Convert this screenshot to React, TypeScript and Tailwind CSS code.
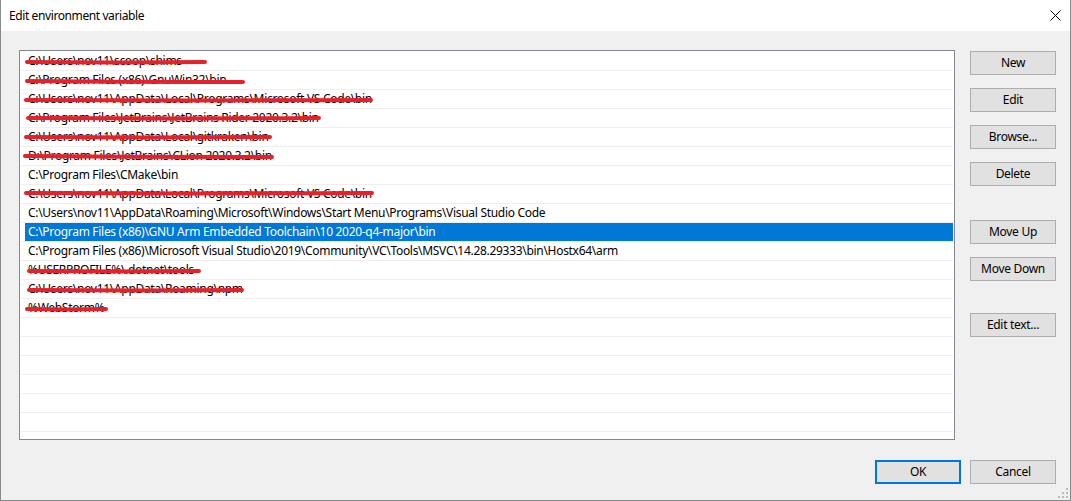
import React from "react";

type Row = { text: string; strike?: [number, number, number, number] };

const rows: Row[] = [
  { text: "C:\\Users\\nov11\\scoop\\shims", strike: [27, 61, 205, 61] },
  { text: "C:\\Program Files (x86)\\GnuWin32\\bin", strike: [27, 80, 243, 81] },
  { text: "C:\\Users\\nov11\\AppData\\Local\\Programs\\Microsoft VS Code\\bin", strike: [26, 99, 371, 99] },
  { text: "C:\\Program Files\\JetBrains\\JetBrains Rider 2020.3.2\\bin", strike: [28, 117, 319, 117] },
  { text: "C:\\Users\\nov11\\AppData\\Local\\gitkraken\\bin", strike: [26, 136, 270, 136] },
  { text: "D:\\Program Files\\JetBrains\\CLion 2020.3.2\\bin", strike: [25, 155, 272, 156] },
  { text: "C:\\Program Files\\CMake\\bin" },
  { text: "C:\\Users\\nov11\\AppData\\Local\\Programs\\Microsoft VS Code\\bin", strike: [26, 192, 372, 192] },
  { text: "C:\\Users\\nov11\\AppData\\Roaming\\Microsoft\\Windows\\Start Menu\\Programs\\Visual Studio Code" },
  { text: "C:\\Program Files (x86)\\GNU Arm Embedded Toolchain\\10 2020-q4-major\\bin" },
  { text: "C:\\Program Files (x86)\\Microsoft Visual Studio\\2019\\Community\\VC\\Tools\\MSVC\\14.28.29333\\bin\\Hostx64\\arm" },
  { text: "%USERPROFILE%\\.dotnet\\tools", strike: [29, 270, 199, 270] },
  { text: "C:\\Users\\nov11\\AppData\\Roaming\\npm", strike: [29, 289, 242, 289] },
  { text: "%WebStorm%", strike: [27, 308, 106, 308] },
];

const SELECTED = 9;
const TOTAL_ROWS = 20;

function Btn({ children, primary }: { children: React.ReactNode; primary?: boolean }) {
  return (
    <div
      className={
        "w-[86px] h-[24px] flex items-center justify-center bg-[#e1e1e1] text-[12px] text-black tracking-[-0.3px] " +
        (primary ? "border-2 border-[#0078d7]" : "border border-[#adadad]")
      }
    >
      {children}
    </div>
  );
}

export default function App() {
  const all: (Row | null)[] = [];
  for (let i = 0; i < TOTAL_ROWS; i++) all.push(rows[i] ?? null);

  return (
    <div
      className="relative w-[1071px] h-[501px] flex flex-col border-l border-r border-b border-[#8a8a8a] bg-[#f0f0f0] overflow-hidden"
      style={{ fontFamily: '"Noto Sans", "Liberation Sans", sans-serif' }}
    >
      {/* Title bar */}
      <div className="h-[31px] bg-white flex items-center justify-between pl-[8px] pr-[9px] shrink-0">
        <span className="text-[12px] text-black tracking-[-0.4px]">Edit environment variable</span>
        <svg width="11" height="11" viewBox="0 0 11 11" className="mt-[-1px]">
          <path d="M0.5 0.5 L10.5 10.5 M10.5 0.5 L0.5 10.5" stroke="#000" strokeWidth="1" />
        </svg>
      </div>

      {/* Body */}
      <div className="flex-1 flex flex-col pt-[19px] pl-[18px] pr-[14px]">
        <div className="flex gap-[15px]">
          {/* List */}
          <div className="relative w-[936px] h-[390px] border border-[#828790] bg-white p-px">
            {all.map((r, i) => (
              <div key={i} className="h-[19px] border-b border-[#efefef] flex">
                {i === SELECTED ? (
                  <div className="ml-[4px] flex-1 bg-[#0078d7] text-white pl-[3px] text-[12px] leading-[18px] tracking-[-0.3px] whitespace-nowrap">
                    {r?.text}
                  </div>
                ) : (
                  <div className="pl-[7px] text-[12px] leading-[18px] tracking-[-0.3px] text-black whitespace-nowrap">
                    {r?.text ?? ""}
                  </div>
                )}
              </div>
            ))}
            {/* red scribbles overlay */}
            <svg
              className="absolute left-[-20px] top-[-50px] pointer-events-none"
              width="1071"
              height="501"
              viewBox="0 0 1071 501"
            >
              {rows.map((r, i) =>
                r.strike ? (
                  <path
                    key={i}
                    d={`M${r.strike[0]} ${r.strike[1]} Q ${(r.strike[0] + r.strike[2]) / 2} ${
                      (r.strike[1] + r.strike[3]) / 2 + 0.8
                    } ${r.strike[2]} ${r.strike[3]}`}
                    stroke="#e8202a"
                    strokeWidth="4"
                    strokeLinecap="round"
                    fill="none"
                  />
                ) : null
              )}
            </svg>
          </div>

          {/* Buttons */}
          <div className="flex flex-col pt-px">
            <Btn>New</Btn>
            <div className="mt-[13px]">
              <Btn>Edit</Btn>
            </div>
            <div className="mt-[13px]">
              <Btn>Browse...</Btn>
            </div>
            <div className="mt-[13px]">
              <Btn>Delete</Btn>
            </div>
            <div className="mt-[34px]">
              <Btn>Move Up</Btn>
            </div>
            <div className="mt-[13px]">
              <Btn>Move Down</Btn>
            </div>
            <div className="mt-[32px]">
              <Btn>Edit text...</Btn>
            </div>
          </div>
        </div>

        {/* Bottom buttons */}
        <div className="flex justify-end gap-[9px] mt-[20px]">
          <Btn primary>OK</Btn>
          <Btn>Cancel</Btn>
        </div>
      </div>

      {/* size grip */}
      <svg className="absolute right-[1px] bottom-[1px]" width="11" height="11" viewBox="0 0 11 11">
        <rect x="8" y="0" width="2" height="2" fill="#bcbcbc" />
        <rect x="4" y="4" width="2" height="2" fill="#bcbcbc" />
        <rect x="8" y="4" width="2" height="2" fill="#bcbcbc" />
        <rect x="0" y="8" width="2" height="2" fill="#bcbcbc" />
        <rect x="4" y="8" width="2" height="2" fill="#bcbcbc" />
        <rect x="8" y="8" width="2" height="2" fill="#bcbcbc" />
      </svg>
    </div>
  );
}
